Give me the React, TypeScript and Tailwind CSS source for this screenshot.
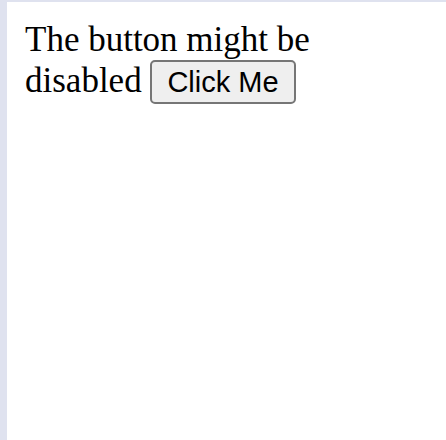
export default function App() {
  return (
    <div className="min-h-[440px] w-[446px] bg-[#dfe2ef] pl-[7px] pt-[2px]">
      <div className="min-h-[438px] bg-white px-[18px] pt-[18px] font-['Liberation_Serif',serif] text-[35px] leading-[40px] text-black">
        <p className="w-[300px]">
          The button might be disabled{" "}
          <button
            type="button"
            className="rounded-[5px] border-2 border-[#767676] bg-[#efefef] px-[15px] py-[2px] font-['Liberation_Sans',Arial,sans-serif] text-[29px] leading-[36px] text-black"
          >
            Click Me
          </button>
        </p>
      </div>
    </div>
  );
}
